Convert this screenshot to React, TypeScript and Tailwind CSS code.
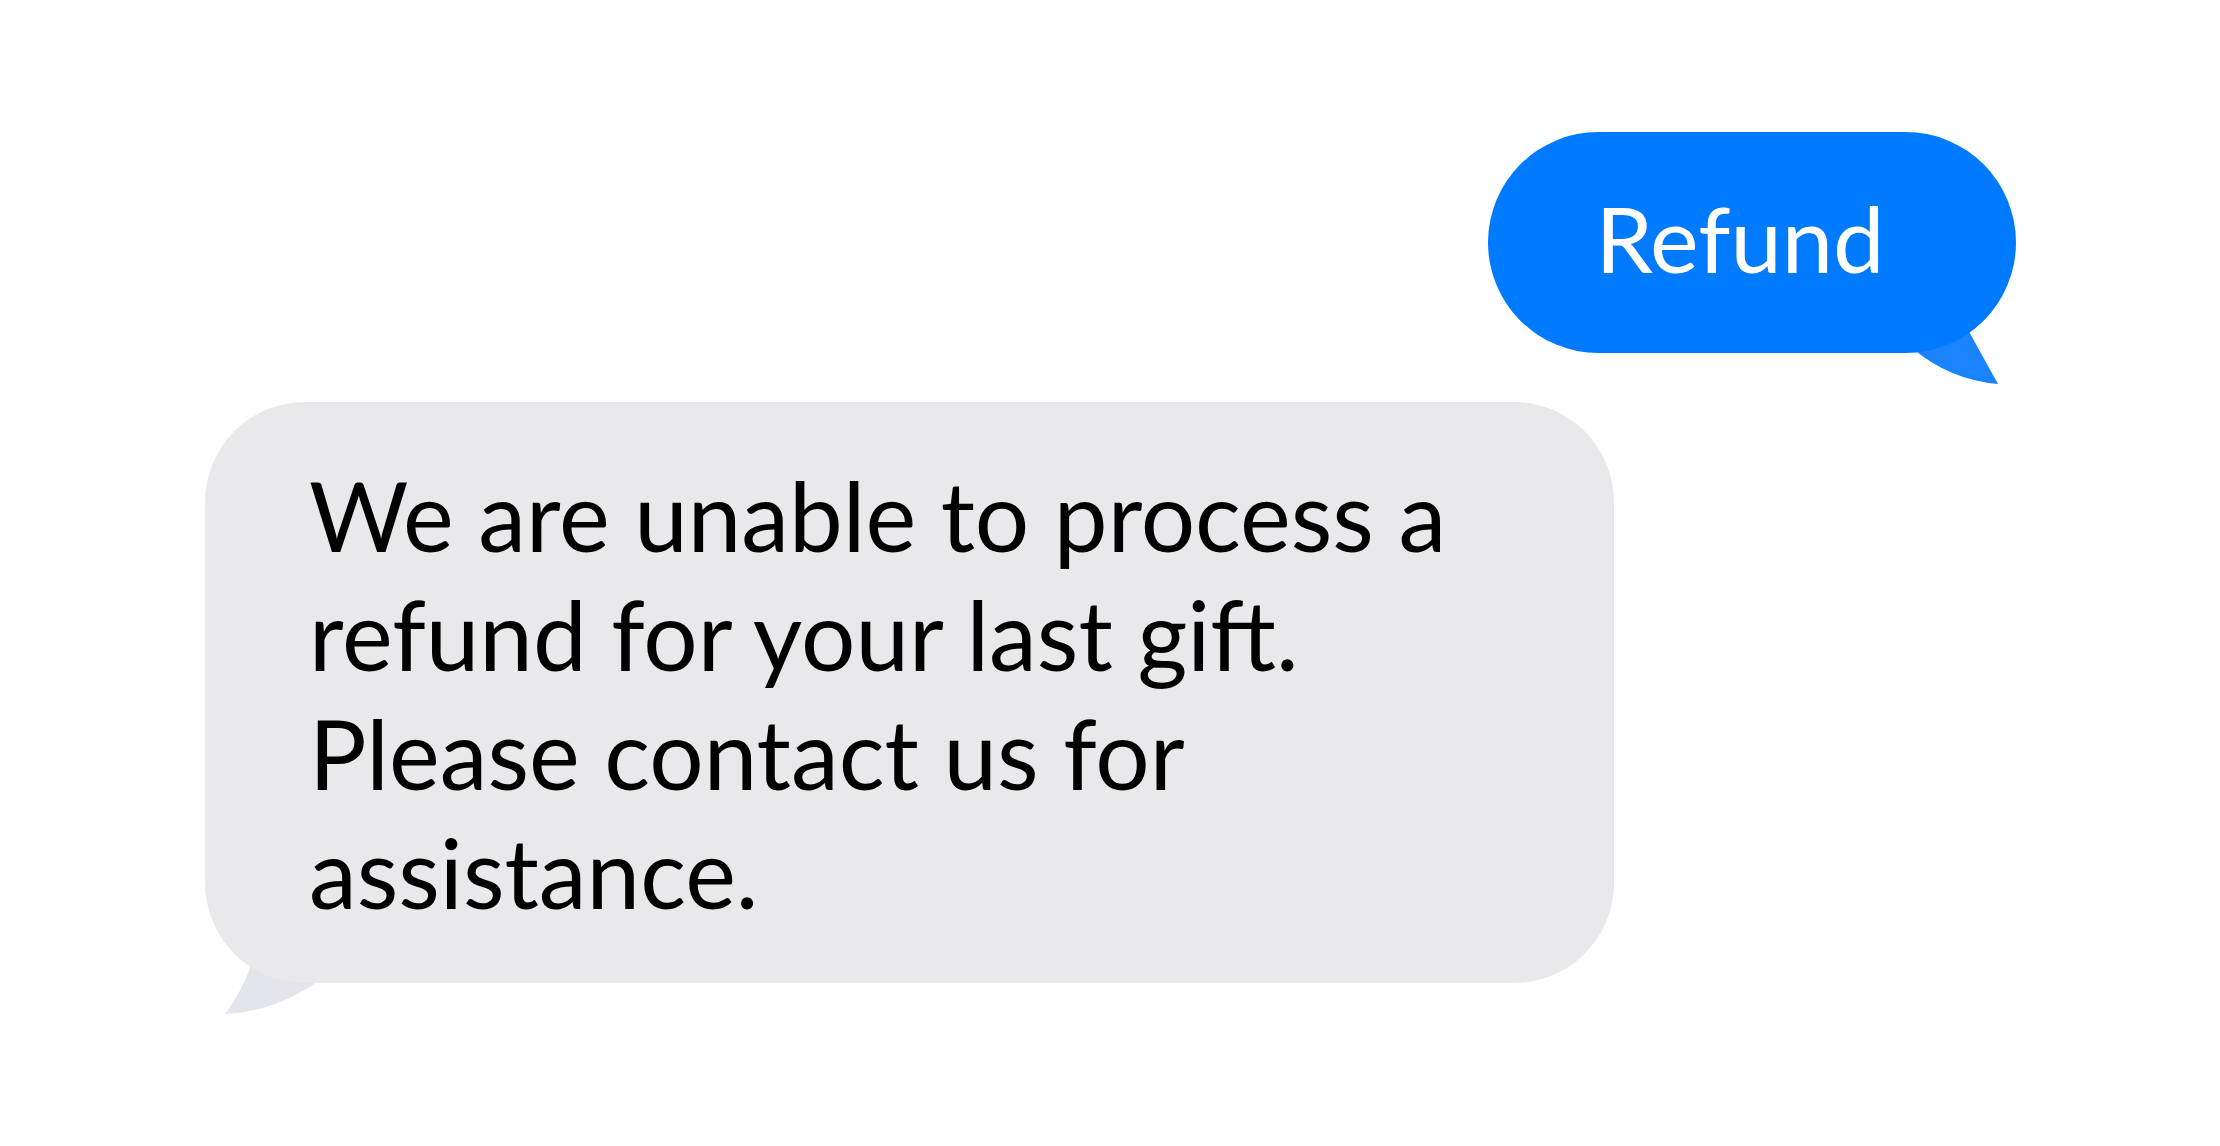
export default function App() {
  const lines = [
    'We are unable to process a',
    'refund for your last gift.',
    'Please contact us for',
    'assistance.',
  ]

  return (
    <div className="w-[2220px] h-[1146px] bg-white overflow-hidden font-['Lato','Liberation_Sans',sans-serif]">
      <div className="flex flex-col pt-[132px] pl-[205px] pr-[204px]">
        {/* Outgoing bubble */}
        <div className="relative self-end">
          <svg
            className="absolute left-[412px] top-[188px]"
            width="110"
            height="70"
            viewBox="0 0 110 70"
          >
            <path d="M12 28 Q 50 60 98 64 L 67 8 Z" fill="#1a84ff" />
          </svg>
          <div className="relative w-[528px] h-[221px] rounded-full bg-[#007aff] flex items-center justify-center pr-[24px] pb-[10px]">
            <span className="text-white text-[92px] leading-none">Refund</span>
          </div>
        </div>

        {/* Incoming bubble */}
        <div className="relative self-start mt-[49px]">
          <svg
            className="absolute left-[10px] top-[548px]"
            width="110"
            height="80"
            viewBox="0 0 110 80"
          >
            <path d="M38 10 Q 28 40 10 64 Q 60 62 105 30 Z" fill="#e4e4ec" />
          </svg>
          <div className="relative w-[1409px] h-[581px] rounded-[100px] bg-[#e9e9eb] pl-[104px] pt-[53px]">
            {lines.map((l) => (
              <div key={l} className="text-black text-[96px] leading-[119px] whitespace-nowrap">
                {l}
              </div>
            ))}
          </div>
        </div>
      </div>
    </div>
  )
}
